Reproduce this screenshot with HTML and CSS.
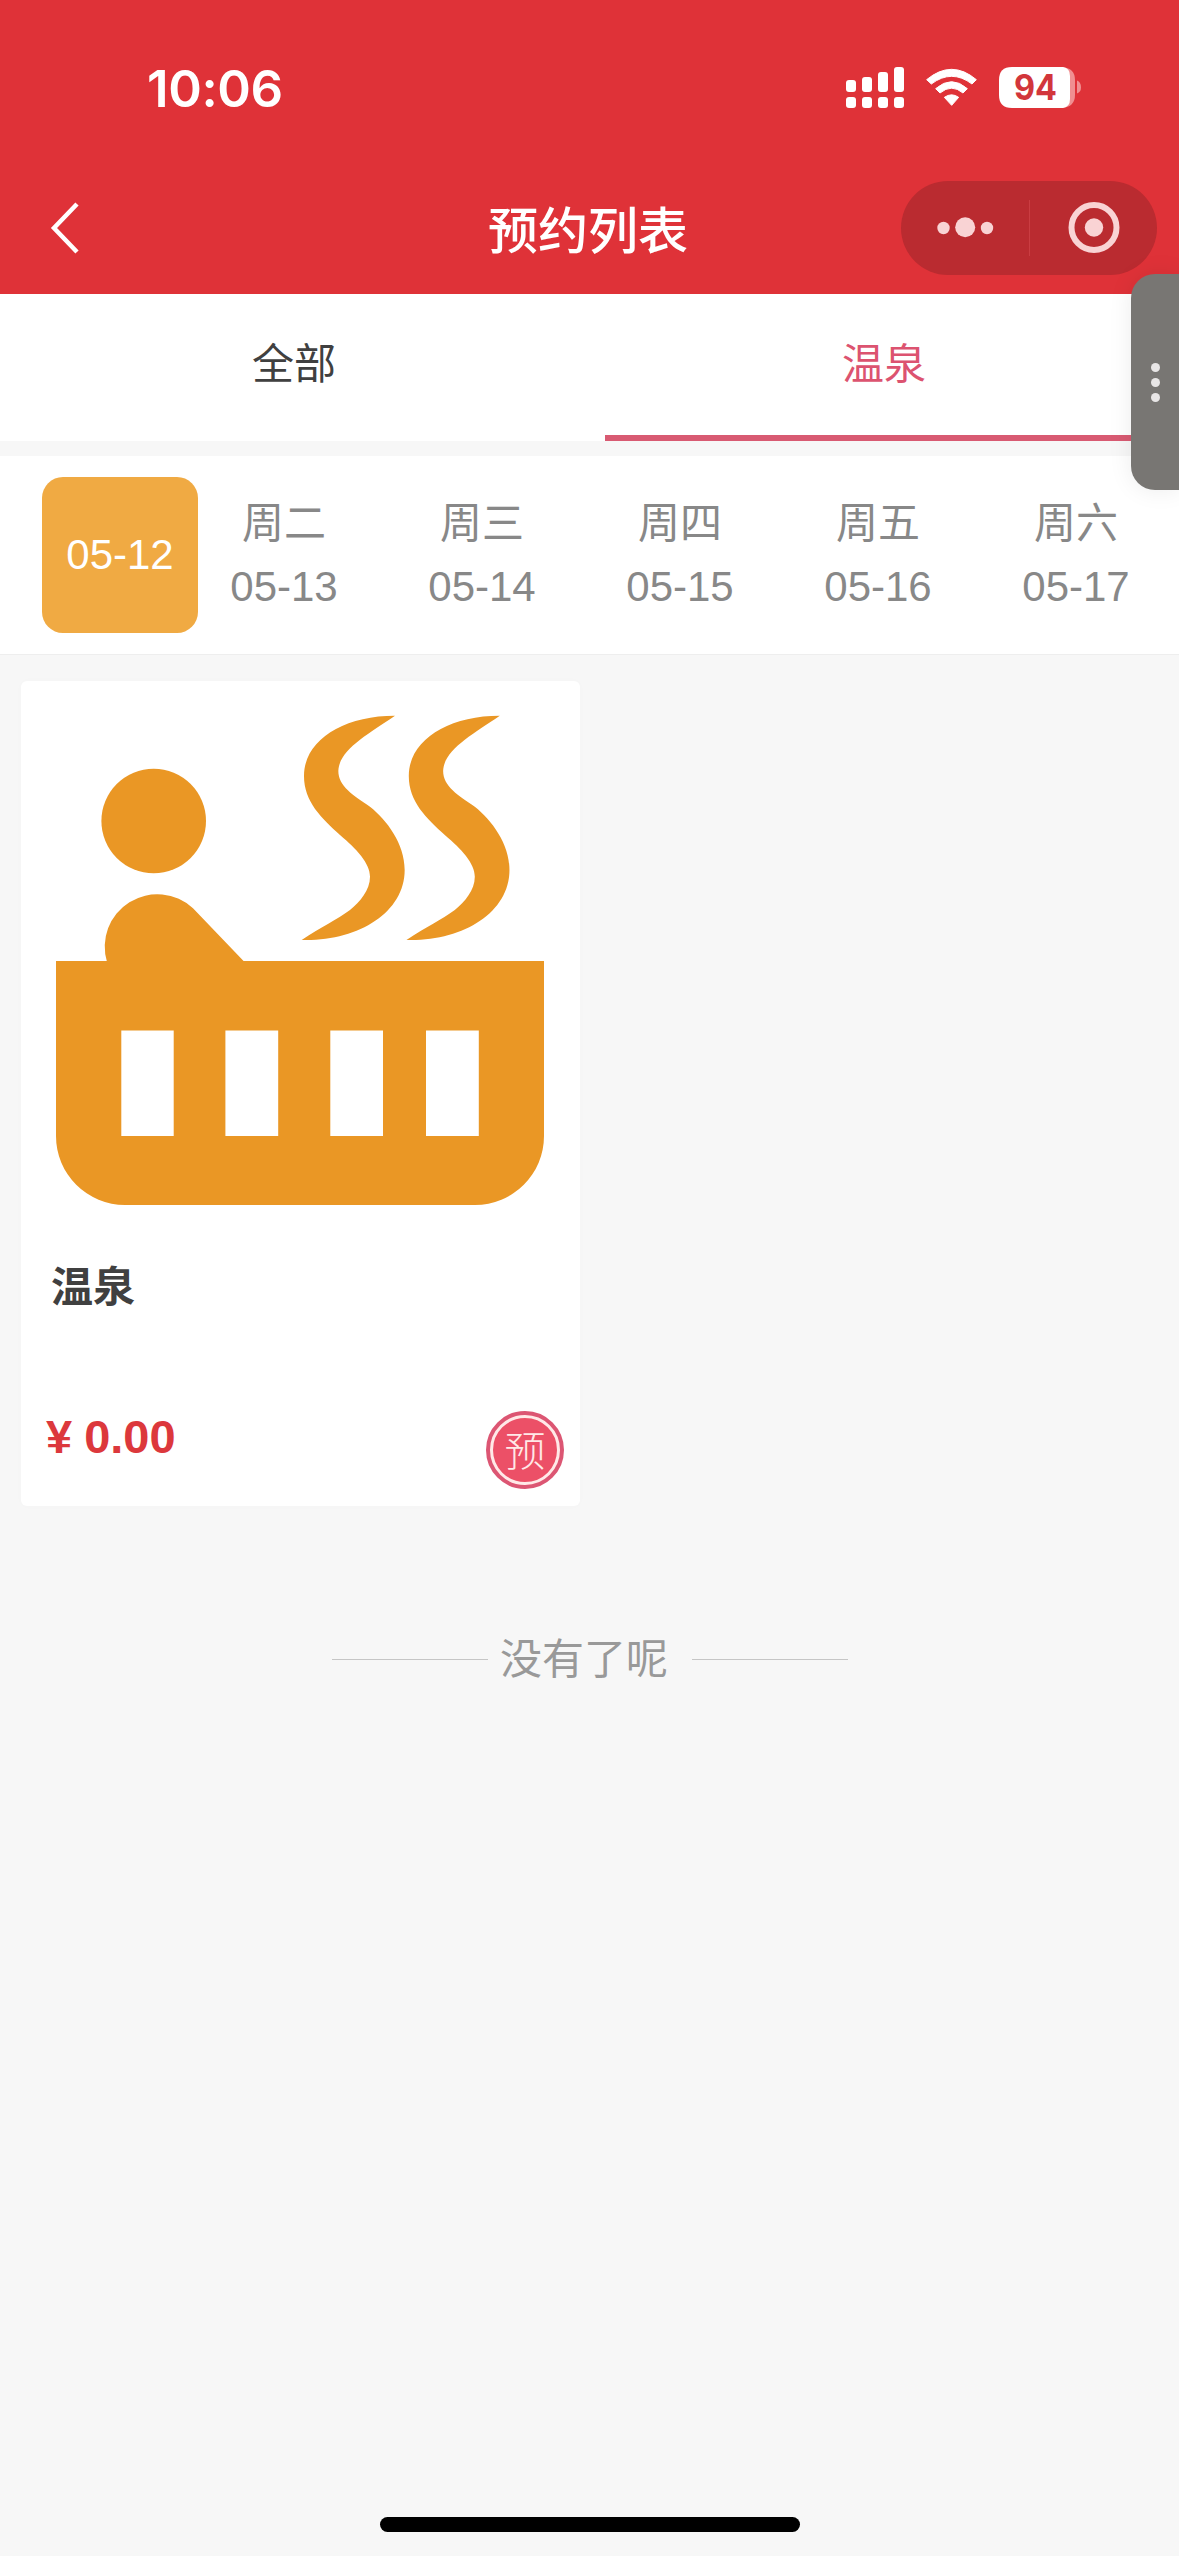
FILE: index.html
```html
<!DOCTYPE html>
<html lang="zh-CN">
<head>
<meta charset="utf-8">
<title>预约列表</title>
<link rel="stylesheet" href="styles.css">
</head>
<body>
<div class="screen">
  <header class="header">
    <div class="status">
      <span class="time">10:06</span>
      <svg class="status-icons" width="236" height="42" viewBox="846 67 236 42" fill="#fff">
        <rect x="846" y="80" width="10" height="12" rx="3"/><rect x="862" y="77" width="10" height="15" rx="3"/><rect x="878" y="72" width="10" height="20" rx="3"/><rect x="894" y="67" width="10" height="25" rx="3"/>
        <rect x="846" y="97" width="10" height="11" rx="3"/><rect x="862" y="97" width="10" height="11" rx="3"/><rect x="878" y="97" width="10" height="11" rx="3"/><rect x="894" y="97" width="10" height="11" rx="3"/>
        <g transform="translate(840 60) scale(.33333)" stroke="#fff" stroke-width="3" stroke-linejoin="round">
          <path d="M260 59Q335 -3 409 59L396 72Q335 26 274 72Z"/>
          <path d="M287 86Q335 44 382 86L369 99Q335 70 300 99Z"/>
          <path d="M313 112Q335 97 356 112L335 136Z"/>
        </g>
        <path d="M1062 67Q1075 68 1075 80V95Q1075 107 1062 108ZM1077 80.500Q1081 82 1081 87.500Q1081 92 1077 93.500Z" fill="#f08f91"/>
        <path d="M1012 67H1063Q1070 68 1070 76V99Q1070 107 1063 108H1012Q999 108 999 95V80Q999 67 1012 67Z"/>
        <text class="battery-level" x="1035.500" y="100" text-anchor="middle" textLength="43" lengthAdjust="spacingAndGlyphs">94</text>
      </svg>
    </div>
    <div class="nav">
      <svg class="back" width="30" height="54" viewBox="0 0 30 54" fill="none" stroke="#fff" stroke-width="4.500"><path d="M27 3L4 27L27 51"/></svg>
      <h1 class="title">预约列表</h1>
      <div class="capsule">
        <svg width="256" height="94" viewBox="901 181 256 94" fill="#f9d3d4">
          <circle cx="943.500" cy="228" r="6.200"/><circle cx="965.200" cy="227.300" r="10"/><circle cx="987" cy="228" r="6.200"/>
          <rect x="1029" y="200" width="1" height="56" fill="#ca3d42"/>
          <circle cx="1094" cy="227.500" r="22.500" fill="none" stroke="#f9d3d4" stroke-width="6"/><circle cx="1094" cy="227.500" r="9.200"/>
        </svg>
      </div>
    </div>
  </header>

  <nav class="tabs">
    <div class="tab">全部</div>
    <div class="tab active">温泉</div>
  </nav>

  <section class="dates">
    <div class="today">05-12</div>
    <div class="day"><span>周二</span><span>05-13</span></div>
    <div class="day"><span>周三</span><span>05-14</span></div>
    <div class="day"><span>周四</span><span>05-15</span></div>
    <div class="day"><span>周五</span><span>05-16</span></div>
    <div class="day"><span>周六</span><span>05-17</span></div>
  </section>

  <article class="card">
    <svg class="cover" width="559" height="559" viewBox="21 681 559 559" fill="#ea9725">
      <circle cx="153.700" cy="821" r="52.300"/>
      <path d="M107 962A52.500 52.500 0 0 1 193 908.300L244.500 962Z"/>
      <path fill-rule="evenodd" d="M56 961H544V1136A69 69 0 0 1 475 1205H125A69 69 0 0 1 56 1136ZM121.300 1030.400V1136H173.700V1030.400ZM225.400 1030.400V1136H278.200V1030.400ZM330.300 1030.400V1136H383V1030.400ZM426 1030.400V1136H478.800V1030.400Z"/>
      <path id="steam" transform="translate(290 700) scale(.33333)" d="M315 47C160 47 42 120 42 228C42 305 95 355 150 405C200 447 240 490 240 530C240 570 210 605 180 630C140 660 95 680 35 720C200 725 344 640 344 510C344 430 290 360 240 320C190 285 145 260 145 213C147 150 230 105 315 47Z"/>
      <use href="#steam" x="104.800"/>
    </svg>
    <h2 class="name">温泉</h2>
    <div class="buy">
      <div class="price"><span class="yen">¥</span><span>0.00</span></div>
      <div class="book"><span>预</span></div>
    </div>
  </article>

  <div class="end"><i></i><span>没有了呢</span><i></i></div>
  <div class="home-bar"></div>

  <div class="drawer"><b></b><b></b><b></b></div>
</div>
</body>
</html>
```
FILE: styles.css
```css
* { box-sizing: border-box; }
body { margin: 0; background: #f7f7f7; }
.screen {
  position: relative;
  width: 1179px;
  height: 2556px;
  overflow: hidden;
  display: flex;
  flex-direction: column;
  background: #f7f7f7;
  font-family: "Liberation Sans", "Noto Sans CJK SC", sans-serif;
  color: #404040;
}
.header { height: 294px; flex: none; background: #df3238; color: #fff; }
.status { display: flex; align-items: flex-start; height: 181px; padding: 67px 97px 0 147px; justify-content: space-between; }
.status-icons { display: block; }
.time { font: 600 51px/44px Inter, sans-serif; letter-spacing: -0.4px; }
.battery-level { font: 700 35px Inter, sans-serif; fill: #d2363b; }
.nav { display: grid; grid-template-columns: 300px 1fr 300px; align-items: center; height: 94px; }
.back { margin-left: 50px; display: block; }
.title { margin: 0; padding: 0 3px 3px 0; text-align: center; font-size: 50px; line-height: 60px; font-weight: 500; font-family: "Noto Sans CJK SC", sans-serif; }
.capsule { margin-left: 22px; width: 256px; height: 94px; border-radius: 47px; background: #ba2b30; }
.capsule svg { display: block; }
.tabs { display: grid; grid-template-columns: 574px 574px; column-gap: 31px; height: 147px; flex: none; background: #fff; }
.tab { font-size: 42px; line-height: 141px; padding-left: 14px; text-align: center; }
.tab.active { color: #dc5370; padding: 0 16px 0 0; border-bottom: 6px solid #d85a72; }
.dates { display: flex; align-items: center; height: 199px; flex: none; margin-top: 15px; padding-left: 42px; background: #fff; border-bottom: 1px solid #eee; color: #888; font-size: 42px; overflow: hidden; }
.today { width: 156px; height: 156px; flex: none; margin-right: 32px; border-radius: 21px; background: #f0aa43; color: #fff; line-height: 156px; text-align: center; }
.day { width: 108px; flex: none; margin-right: 90px; display: flex; flex-direction: column; align-items: center; line-height: 63px; white-space: nowrap; }
.card { width: 559px; height: 825px; flex: none; margin: 26px 0 0 21px; border-radius: 6px; background: #fff; display: flex; flex-direction: column; box-shadow: 0 0 8px rgba(0,0,0,.015); }
.cover { display: block; flex: none; }
.name { margin: 18px 0 0 30px; font-size: 42px; line-height: 60px; font-weight: 700; }
.buy { display: flex; justify-content: space-between; padding: 93px 16px 0 25px; }
.price { display: flex; gap: 12px; color: #dc383c; font-size: 47px; line-height: 52px; font-weight: 700; }
.book { width: 78px; height: 78px; border: 4px solid #dc5673; border-radius: 50%; background: #ec5067; display: flex; }
.book span { flex: 1; border: 3px solid #ffe9e8; border-radius: 50%; color: #ffe9e8; text-align: center; font: 300 41px/60px "Noto Sans CJK SC", sans-serif; }
.end { display: flex; align-items: center; margin: 123px 0 0 332px; height: 60px; color: #999; font-size: 42px; line-height: 60px; }
.end i { width: 156px; height: 1px; background: #c6c6c6; }
.end span { margin: 0 24px 0 12px; padding-top: 2px; }
.home-bar { width: 420px; height: 15px; border-radius: 8px; background: #000; margin: auto auto 24px 380px; }
.drawer { position: absolute; right: 0; top: 274px; width: 48px; height: 216px; border-radius: 24px 0 0 24px; background: #787673; box-shadow: 0 0 24px rgba(0,0,0,.08); display: flex; flex-direction: column; align-items: center; justify-content: center; gap: 6px; }
.drawer b { width: 9px; height: 9px; border-radius: 50%; background: #e8e6e6; }
```
